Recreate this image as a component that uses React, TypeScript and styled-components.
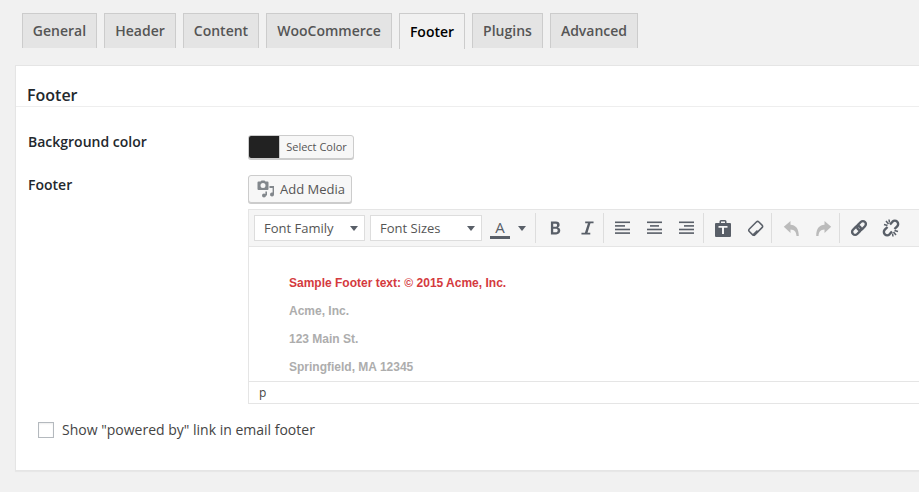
import React from 'react';
import styled, { createGlobalStyle } from 'styled-components';

const GlobalStyle = createGlobalStyle`
  html, body {
    margin: 0;
    height: 100%;
    overflow: hidden;
    background: #f1f1f1;
    font-family: 'Open Sans', sans-serif;
    color: #444;
  }
`;

const Page = styled.div`
  width: 1100px;
  padding: 13px 0 0 15px;
`;

const Tabs = styled.div`
  display: flex;
  gap: 7px;
  padding-left: 7px;
  height: 35px;
`;

const Tab = styled.div<{ $active?: boolean; $width: number }>`
  display: flex;
  align-items: center;
  justify-content: center;
  box-sizing: border-box;
  width: ${p => p.$width}px;
  height: ${p => (p.$active ? 36 : 35)}px;
  border: 1px solid #ccc;
  border-bottom: 0;
  background: ${p => (p.$active ? '#f1f1f1' : '#e4e4e4')};
  color: ${p => (p.$active ? '#000' : '#555')};
  font-size: 14px;
  font-weight: 600;
  line-height: 24px;
`;

const Card = styled.div`
  box-sizing: border-box;
  margin-top: 17px;
  height: 406px;
  background: #fff;
  border: 1px solid #e5e5e5;
  box-shadow: 0 1px 1px rgba(0, 0, 0, 0.04);
`;

const Heading = styled.h2`
  margin: 0;
  box-sizing: border-box;
  height: 41px;
  padding: 19px 0 0 11px;
  font-size: 16px;
  line-height: 20px;
  font-weight: 600;
  color: #23282d;
  border-bottom: 1px solid #eee;
`;

const Row = styled.div`
  display: flex;
  padding-left: 12px;
`;

const Label = styled.div`
  width: 220px;
  flex: none;
  font-size: 14px;
  font-weight: 600;
  line-height: 20px;
  color: #23282d;
`;

const ColorRow = styled(Row)`
  margin-top: 25px;
  height: 29px;
`;

const EditorRow = styled(Row)`
  margin-top: 14px;
`;

const ColorButton = styled.button`
  display: flex;
  box-sizing: border-box;
  width: 106px;
  height: 24px;
  margin-top: 3px;
  padding: 0;
  border: 1px solid #ccc;
  border-radius: 3px;
  overflow: hidden;
  background: #f7f7f7;
  box-shadow: 0 1px 0 #ccc;
  font-family: inherit;
  font-size: 11px;
  line-height: 22px;
  color: #555;
`;

const Swatch = styled.span`
  width: 30px;
  height: 100%;
  background: #222;
  border-right: 1px solid #ccc;
`;

const SwatchText = styled.span`
  flex: 1;
  text-align: center;
`;

const EditorColumn = styled.div`
  flex: 1;
`;

const MediaButton = styled.button`
  display: flex;
  align-items: center;
  gap: 5px;
  box-sizing: border-box;
  width: 104px;
  height: 28px;
  padding: 0 0 0 8px;
  border: 1px solid #ccc;
  border-radius: 3px;
  background: #f7f7f7;
  box-shadow: 0 1px 0 #ccc;
  font-family: inherit;
  font-size: 13px;
  color: #555;
`;

const Editor = styled.div`
  box-sizing: border-box;
  margin-top: 6px;
  height: 195px;
  border: 1px solid #e5e5e5;
  display: flex;
  flex-direction: column;
`;

const Toolbar = styled.div`
  display: flex;
  flex: none;
  align-items: center;
  box-sizing: border-box;
  height: 37px;
  padding-left: 5px;
  background: #f5f5f5;
  border-bottom: 1px solid #e5e5e5;
`;

const SelectBox = styled.div<{ $width: number }>`
  display: flex;
  align-items: center;
  justify-content: space-between;
  box-sizing: border-box;
  width: ${p => p.$width}px;
  height: 26px;
  margin-right: 5px;
  padding: 0 6px 0 9px;
  background: #fff;
  border: 1px solid #ddd;
  font-size: 13px;
  color: #555;
`;

const Caret = styled.span`
  width: 0;
  height: 0;
  border-left: 4px solid transparent;
  border-right: 4px solid transparent;
  border-top: 5px solid #595f68;
`;

const ColorPicker = styled.div`
  display: flex;
  align-items: center;
  width: 48px;
  height: 26px;
  padding-left: 3px;
  box-sizing: border-box;
  gap: 8px;
`;

const ColorA = styled.span`
  display: block;
  width: 20px;
  text-align: center;
  font-size: 15px;
  line-height: 18px;
  color: #595f68;
  border-bottom: 3px solid #595f68;
`;

const Group = styled.div`
  display: flex;
  align-items: center;
  height: 30px;
  padding-left: 3px;
  border-left: 1px solid #ddd;
`;

const ToolButton = styled.span<{ $disabled?: boolean }>`
  display: flex;
  align-items: center;
  justify-content: center;
  width: 32px;
  height: 30px;
  color: ${p => (p.$disabled ? '#bbb' : '#595f68')};
`;

const Body = styled.div`
  flex: 1;
  min-height: 0;
  overflow: hidden;
  padding: 29px 0 0 40px;
  font-family: 'Liberation Sans', Arial, sans-serif;
  font-size: 12px;
  font-weight: 700;
  line-height: 14px;
`;

const BodyLine = styled.p<{ $accent?: boolean }>`
  margin: 0 0 14px;
  color: ${p => (p.$accent ? '#d43a3e' : '#adadad')};
`;

const StatusBar = styled.div`
  flex: none;
  box-sizing: border-box;
  height: 22px;
  padding-left: 10px;
  border-top: 1px solid #e5e5e5;
  font-size: 12px;
  line-height: 22px;
  color: #444;
`;

const CheckRow = styled.label`
  display: flex;
  align-items: center;
  gap: 8px;
  margin: 16px 0 0 22px;
  font-size: 14px;
  line-height: 20px;
  color: #444;
`;

const CheckBox = styled.span`
  box-sizing: border-box;
  width: 16px;
  height: 16px;
  background: #fff;
  border: 1px solid #b4b9be;
  box-shadow: inset 0 1px 2px rgba(0, 0, 0, 0.07);
`;

const TABS = [
  { label: 'General', width: 75 },
  { label: 'Header', width: 72 },
  { label: 'Content', width: 76 },
  { label: 'WooCommerce', width: 126 },
  { label: 'Footer', width: 66, active: true },
  { label: 'Plugins', width: 71 },
  { label: 'Advanced', width: 88 },
];

const MediaIcon = () => (
  <svg width="18" height="18" viewBox="0 0 18 18" fill="#82878c">
    <path
      fillRule="evenodd"
      d="M1.500 1.500h2l1-1h3l1 1h2a1 1 0 0 1 1 1V9a1 1 0 0 1-1 1h-9a1 1 0 0 1-1-1V2.500a1 1 0 0 1 1-1zM6 3a2.500 2.500 0 1 0 0 5 2.500 2.500 0 0 0 0-5z"
    />
    <path d="M12.500 6H17v8.500a2 2 0 1 1-1.400-1.900V8h-3.100zM7 17.500a2 2 0 1 0 0-4 2 2 0 0 0 0 4zM8.400 15.500H10V11.500H8.400z" />
  </svg>
);

const AlignIcon = ({ lines }: { lines: number[][] }) => (
  <svg width="16" height="14" viewBox="0 0 16 14" fill="currentColor">
    {lines.map(([x, w], i) => (
      <rect key={i} x={x} y={i * 3.6 + 0.5} width={w} height="1.6" />
    ))}
  </svg>
);

const PasteIcon = () => (
  <svg width="16" height="17" viewBox="0 0 16 17" fill="currentColor">
    <path
      fillRule="evenodd"
      d="M1 3h3.500V1.500A1.500 1.500 0 0 1 6 0h4a1.500 1.500 0 0 1 1.500 1.500V3H15a1 1 0 0 1 1 1v12a1 1 0 0 1-1 1H1a1 1 0 0 1-1-1V4a1 1 0 0 1 1-1zM6 1.500V3h4V1.500zM3.500 6v1.800h3.500V14h2V7.800h3.500V6z"
    />
  </svg>
);

const EraserIcon = () => (
  <svg width="17" height="17" viewBox="0 0 17 17" fill="none" stroke="currentColor" strokeWidth="1.5">
    <g transform="rotate(-45 8.500 8.500)">
      <rect x="2" y="4.500" width="13.500" height="8" rx="1.800" />
      <path d="M2 10.500h6.500v2.500H2z" fill="currentColor" stroke="none" />
    </g>
  </svg>
);

const UndoIcon = ({ flip }: { flip?: boolean }) => (
  <svg width="17" height="17" viewBox="0 0 17 17" fill="currentColor" style={flip ? { transform: 'scaleX(-1)' } : undefined}>
    <path d="M7.500 1v3.800c5 .2 8.300 3.600 8.300 11.200h-2.300c-.3-4.300-2-6.300-6-6.500V13L.800 6.800z" />
  </svg>
);

const LinkIcon = () => (
  <svg width="18" height="18" viewBox="0 0 18 18" fill="none" stroke="currentColor" strokeWidth="2.4">
    <g transform="rotate(-45 9 9)">
      <rect x="0.500" y="6" width="10" height="6" rx="3" />
      <rect x="7.500" y="6" width="10" height="6" rx="3" />
    </g>
  </svg>
);

const UnlinkIcon = () => (
  <svg width="20" height="20" viewBox="0 0 20 20" fill="none" stroke="currentColor" strokeWidth="2.4">
    <path d="M9 6.500l2.500-2.800a3.200 3.200 0 0 1 4.700 4.600L13.500 11" />
    <path d="M11 13.500l-2.500 2.800a3.200 3.200 0 0 1-4.700-4.600L6.500 9" />
    <path d="M3 6.500l3.500 1M5 3l2.500 3M8 1.500l.5 3M17 13.500l-3.500-1M15 17l-2.500-3M12 18.500l-.5-3" strokeWidth="1.500" />
  </svg>
);

const App: React.FC = () => (
  <Page>
    <GlobalStyle />
    <Tabs>
      {TABS.map(tab => (
        <Tab key={tab.label} $width={tab.width} $active={tab.active}>
          {tab.label}
        </Tab>
      ))}
    </Tabs>
    <Card>
      <Heading>Footer</Heading>
      <ColorRow>
        <Label>Background color</Label>
        <ColorButton>
          <Swatch />
          <SwatchText>Select Color</SwatchText>
        </ColorButton>
      </ColorRow>
      <EditorRow>
        <Label>Footer</Label>
        <EditorColumn>
          <MediaButton>
            <MediaIcon />
            Add Media
          </MediaButton>
          <Editor>
            <Toolbar>
              <SelectBox $width={111}>
                Font Family
                <Caret />
              </SelectBox>
              <SelectBox $width={112}>
                Font Sizes
                <Caret />
              </SelectBox>
              <ColorPicker>
                <ColorA>A</ColorA>
                <Caret />
              </ColorPicker>
              <Group>
                <ToolButton>
                  <svg width="11" height="14" viewBox="0 0 12 14" fill="currentColor">
                    <path
                      fillRule="evenodd"
                      d="M1 0h5.500C9 0 10.500 1.300 10.500 3.400c0 1.400-.7 2.500-1.800 3 1.500.4 2.500 1.600 2.500 3.400 0 2.600-1.800 4.200-4.500 4.200H1zM3.500 2.300v3.300h2.400c1.100 0 1.800-.6 1.800-1.700s-.7-1.600-1.800-1.600zM3.500 7.800v3.900h2.900c1.200 0 2-.8 2-2s-.8-1.900-2-1.900z"
                    />
                  </svg>
                </ToolButton>
                <ToolButton>
                  <svg width="13" height="14" viewBox="0 0 14 14" fill="currentColor">
                    <path d="M4.500 0h9v1.800h-3.300L7 12.200h3V14H.500v-1.800h3.700L7.500 1.800h-3z" />
                  </svg>
                </ToolButton>
              </Group>
              <Group>
                <ToolButton>
                  <AlignIcon lines={[[0, 15], [0, 10], [0, 15], [0, 15]]} />
                </ToolButton>
                <ToolButton>
                  <AlignIcon lines={[[0, 15], [3, 9], [0, 15], [0, 15]]} />
                </ToolButton>
                <ToolButton>
                  <AlignIcon lines={[[0, 15], [5, 10], [0, 15], [0, 15]]} />
                </ToolButton>
              </Group>
              <Group>
                <ToolButton>
                  <PasteIcon />
                </ToolButton>
                <ToolButton>
                  <EraserIcon />
                </ToolButton>
              </Group>
              <Group>
                <ToolButton $disabled>
                  <UndoIcon />
                </ToolButton>
                <ToolButton $disabled>
                  <UndoIcon flip />
                </ToolButton>
              </Group>
              <Group>
                <ToolButton>
                  <LinkIcon />
                </ToolButton>
                <ToolButton>
                  <UnlinkIcon />
                </ToolButton>
              </Group>
            </Toolbar>
            <Body>
              <BodyLine $accent>Sample Footer text: © 2015 Acme, Inc.</BodyLine>
              <BodyLine>Acme, Inc.</BodyLine>
              <BodyLine>123 Main St.</BodyLine>
              <BodyLine>Springfield, MA 12345</BodyLine>
            </Body>
            <StatusBar>p</StatusBar>
          </Editor>
        </EditorColumn>
      </EditorRow>
      <CheckRow>
        <CheckBox />
        Show "powered by" link in email footer
      </CheckRow>
    </Card>
  </Page>
);

export default App;
